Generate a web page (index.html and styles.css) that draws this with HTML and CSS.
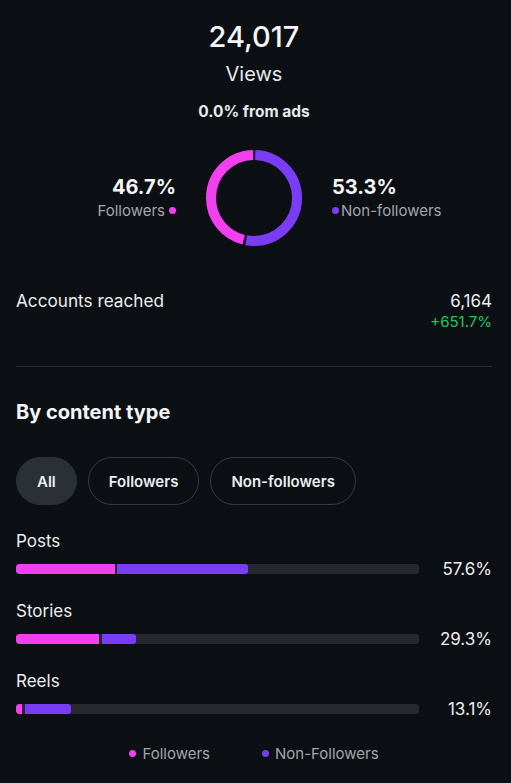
FILE: index.html
```html
<!DOCTYPE html>
<html lang="en">
<head>
<meta charset="utf-8">
<title>Views</title>
<link rel="stylesheet" href="styles.css">
</head>
<body>
<main class="page">
  <section class="header">
    <div class="views-count">24,017</div>
    <div class="views-label">Views</div>
    <div class="ads">0.0% from ads</div>
  </section>

  <section class="donut-row">
    <div class="side side-left">
      <div class="side-pct">46.7%</div>
      <div class="side-label">Followers<span class="dot dot-pink dot-after"></span></div>
    </div>
    <svg class="donut" width="96" height="96" viewBox="0 0 96 96">
      <g transform="rotate(-90 48 48)">
        <circle cx="48" cy="48" r="43" fill="none" stroke="#7a3df6" stroke-width="10" stroke-dasharray="141.5 400" stroke-dashoffset="-1.25"/>
        <circle cx="48" cy="48" r="43" fill="none" stroke="#f23ff0" stroke-width="10" stroke-dasharray="123.7 400" stroke-dashoffset="-145.25"/>
      </g>
    </svg>
    <div class="side side-right">
      <div class="side-pct">53.3%</div>
      <div class="side-label"><span class="dot dot-purple dot-before"></span>Non-followers</div>
    </div>
  </section>

  <section class="reach">
    <div class="reach-label">Accounts reached</div>
    <div class="reach-values">
      <div class="reach-num">6,164</div>
      <div class="reach-change">+651.7%</div>
    </div>
  </section>

  <hr class="divider">

  <h2 class="section-title">By content type</h2>

  <div class="pills">
    <span class="pill pill-active">All</span>
    <span class="pill">Followers</span>
    <span class="pill">Non-followers</span>
  </div>

  <div class="rows">
    <div class="row">
      <div class="row-label">Posts</div>
      <div class="row-bar">
        <div class="track">
          <div class="fill" style="width:57.6%">
            <span class="seg seg-pink" style="width:42.5%"></span>
            <span class="seg seg-purple"></span>
          </div>
        </div>
        <div class="row-pct">57.6%</div>
      </div>
    </div>
    <div class="row">
      <div class="row-label">Stories</div>
      <div class="row-bar">
        <div class="track">
          <div class="fill" style="width:29.7%">
            <span class="seg seg-pink" style="width:69.5%"></span>
            <span class="seg seg-purple"></span>
          </div>
        </div>
        <div class="row-pct">29.3%</div>
      </div>
    </div>
    <div class="row">
      <div class="row-label">Reels</div>
      <div class="row-bar">
        <div class="track">
          <div class="fill" style="width:13.6%">
            <span class="seg seg-pink" style="width:11.5%"></span>
            <span class="seg seg-purple"></span>
          </div>
        </div>
        <div class="row-pct">13.1%</div>
      </div>
    </div>
  </div>

  <div class="legend">
    <span class="legend-item"><span class="dot dot-pink"></span>Followers</span>
    <span class="legend-item"><span class="dot dot-purple"></span>Non-Followers</span>
  </div>
</main>
</body>
</html>
```

FILE: styles.css
```css
html, body {
  margin: 0;
  padding: 0;
  background: #0c0f14;
}
body {
  font-family: Inter, "Noto Sans", "Liberation Sans", sans-serif;
  color: #f2f3f5;
  width: 511px;
  height: 783px;
  overflow: hidden;
}
.page {
  padding: 19px 19px 0 16px;
}
.header {
  text-align: center;
}
.views-count {
  font-size: 29px;
  line-height: 36px;
  font-weight: 500;
  color: #f5f6f7;
}
.views-label {
  font-size: 20px;
  line-height: 26px;
  margin-top: 6px;
  color: #e8e9eb;
}
.ads {
  font-size: 15.5px;
  line-height: 20px;
  font-weight: 700;
  margin-top: 15px;
  color: #e8e9eb;
}
.donut-row {
  display: grid;
  grid-template-columns: 1fr auto 1fr;
  align-items: center;
  column-gap: 30px;
  margin-top: 28px;
}
.donut {
  display: block;
}
.side-left {
  text-align: right;
}
.side-right {
  text-align: left;
}
.side-pct {
  font-size: 20px;
  line-height: 24px;
  font-weight: 700;
  color: #f5f6f7;
}
.side-label {
  font-size: 15px;
  line-height: 20px;
  color: #a3a6ab;
  margin-top: 2px;
}
.dot {
  display: inline-block;
  width: 7px;
  height: 7px;
  border-radius: 50%;
  vertical-align: 2px;
}
.dot-pink { background: #f23ff0; }
.dot-purple { background: #7a3df6; }
.dot-after { margin-left: 4px; }
.dot-before { margin-right: 2px; }

.reach {
  display: flex;
  justify-content: space-between;
  align-items: flex-start;
  margin-top: 44px;
}
.reach-label {
  font-size: 17.2px;
  line-height: 22px;
  color: #eceef0;
}
.reach-values {
  text-align: right;
}
.reach-num {
  font-size: 17px;
  line-height: 22px;
  color: #eceef0;
}
.reach-change {
  font-size: 15px;
  line-height: 20px;
  color: #22c55e;
}
.divider {
  border: 0;
  border-top: 1px solid #272a30;
  margin: 34px 0 0;
}
.section-title {
  font-size: 20px;
  line-height: 26px;
  font-weight: 700;
  margin: 32px 0 0;
  color: #f5f6f7;
}
.pills {
  display: flex;
  gap: 11px;
  margin-top: 32px;
}
.pill {
  display: inline-flex;
  align-items: center;
  height: 48px;
  box-sizing: border-box;
  padding: 0 20px;
  border-radius: 24px;
  border: 1px solid #373a41;
  font-size: 15px;
  font-weight: 600;
  color: #eceef0;
}
.pill-active {
  background: #2b2f36;
  border-color: #2b2f36;
  padding: 0 20px;
}
.rows {
  margin-top: 25px;
}
.row + .row {
  margin-top: 20px;
}
.row-label {
  font-size: 17px;
  line-height: 22px;
  color: #eceef0;
}
.row-bar {
  display: flex;
  align-items: center;
  margin-top: 6px;
  height: 22px;
}
.track {
  flex: 1;
  height: 10px;
  background: #25282e;
  border-radius: 3px;
  overflow: hidden;
}
.fill {
  display: flex;
  gap: 2.5px;
  height: 100%;
}
.seg {
  display: block;
  height: 100%;
}
.seg-pink {
  background: #f23ff0;
  border-radius: 3px 0 0 3px;
}
.seg-purple {
  flex: 1;
  background: #7a3df6;
  border-radius: 0 3px 3px 0;
}
.row-pct {
  width: 73px;
  text-align: right;
  font-size: 17px;
  line-height: 22px;
  color: #eceef0;
}
.legend {
  display: flex;
  justify-content: center;
  gap: 52px;
  margin-top: 24px;
  font-size: 15px;
  line-height: 20px;
  color: #a3a6ab;
}
.legend-item .dot {
  margin-right: 6px;
}
```
